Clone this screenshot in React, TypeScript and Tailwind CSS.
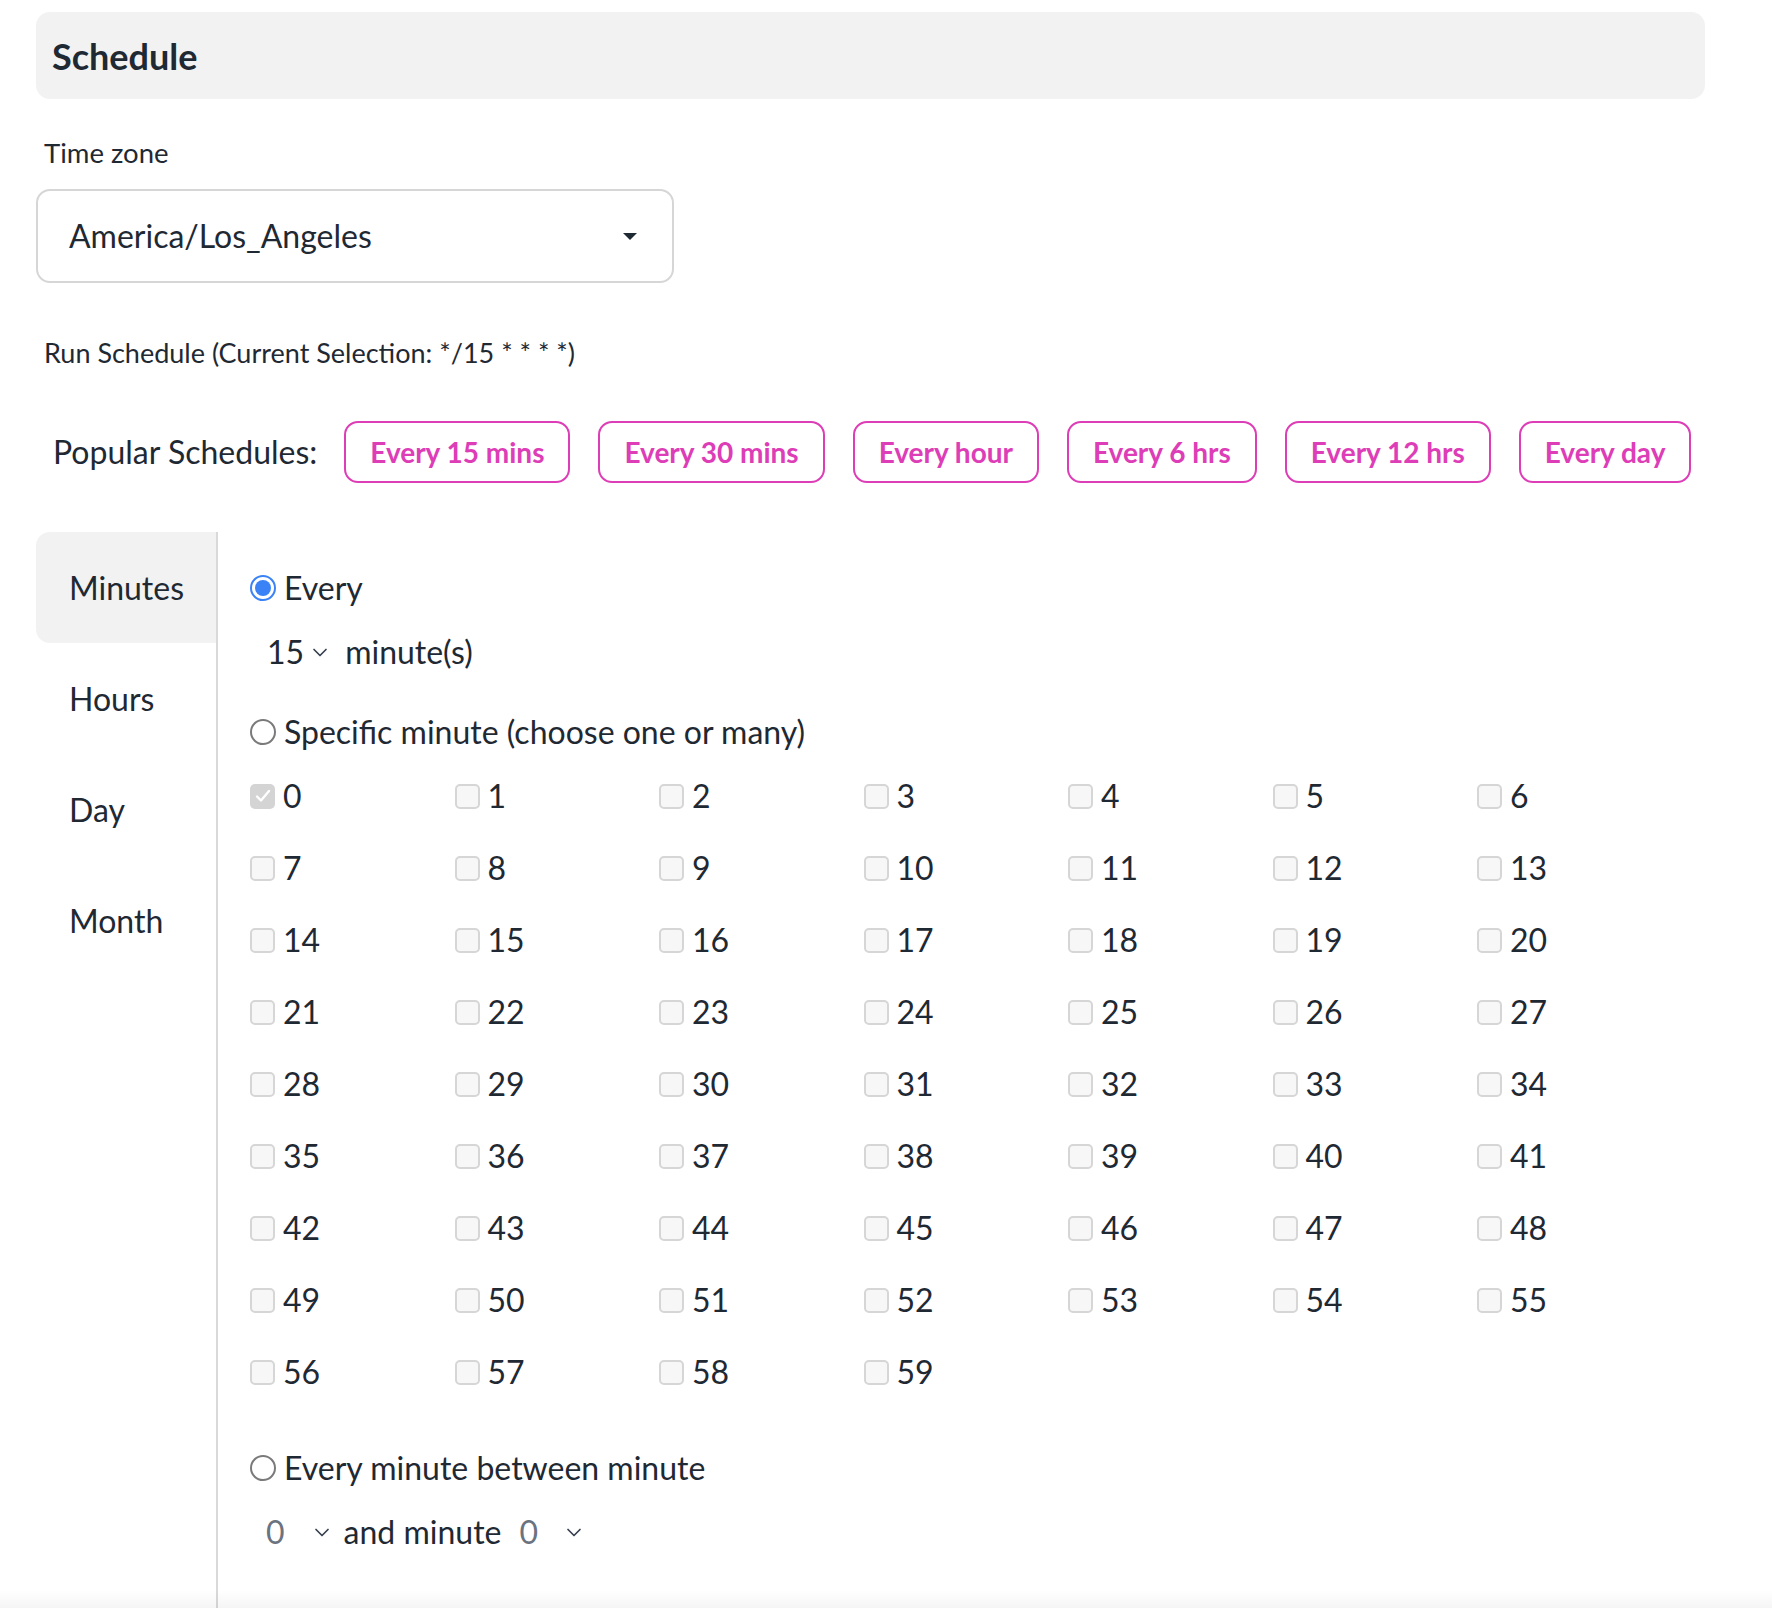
import React, { useState } from 'react';

const popularSchedules = ['Every 15 mins', 'Every 30 mins', 'Every hour', 'Every 6 hrs', 'Every 12 hrs', 'Every day'];
const tabs = ['Minutes', 'Hours', 'Day', 'Month'];
const minutes = Array.from({ length: 60 }, (_, i) => i);

const Radio: React.FC<{ checked?: boolean }> = ({ checked }) =>
  checked ? (
    <span className="w-[26px] h-[26px] rounded-full border-2 border-[#3b82f6] bg-white flex items-center justify-center shrink-0">
      <span className="w-[16px] h-[16px] rounded-full bg-[#3b82f6]" />
    </span>
  ) : (
    <span className="w-[26px] h-[26px] rounded-full border-2 border-[#7a7a7a] bg-white shrink-0" />
  );

const Chevron: React.FC = () => (
  <svg width="16" height="9" viewBox="0 0 16 9" fill="none" className="shrink-0">
    <path d="M2 1.5 L8 7.5 L14 1.5" stroke="#374151" strokeWidth="1.7" strokeLinecap="round" strokeLinejoin="round" />
  </svg>
);

const Checkbox: React.FC<{ checked?: boolean }> = ({ checked }) =>
  checked ? (
    <span className="w-[25px] h-[25px] rounded-[5px] bg-[#d4d4d4] flex items-center justify-center shrink-0">
      <svg width="16" height="14" viewBox="0 0 16 14" fill="none">
        <path d="M2 7.5 L6 11.5 L14 2" stroke="#ffffff" strokeWidth="2.4" strokeLinecap="round" strokeLinejoin="round" />
      </svg>
    </span>
  ) : (
    <span className="w-[25px] h-[25px] rounded-[5px] border-2 border-[#d6d6d6] bg-[#f7f7f7] shrink-0" />
  );

const App: React.FC = () => {
  const [activeTab, setActiveTab] = useState('Minutes');

  return (
    <div className="min-h-[1608px] bg-white text-[#1f2933] font-['Lato','Noto_Sans',sans-serif] pt-[12px] pl-[36px] relative overflow-hidden">
      <div className="w-[1669px]">
        {/* Header */}
        <div className="h-[87px] rounded-[14px] bg-[#f2f2f2] flex items-center pl-[16px]">
          <h1 className="text-[36px] font-bold leading-none">Schedule</h1>
        </div>

        {/* Time zone */}
        <div className="mt-[38px] pl-[8px] text-[27.5px] leading-[32px]">Time zone</div>
        <div className="mt-[20px] w-[638px] h-[94px] rounded-[14px] border-2 border-[#d6d6d6] flex items-center justify-between pl-[31px] pr-[34px]">
          <span className="text-[32px]">America/Los_Angeles</span>
          <svg width="16" height="9" viewBox="0 0 16 9">
            <path d="M1 1 L15 1 L8 8 Z" fill="#1f2933" />
          </svg>
        </div>

        <div className="mt-[54px] pl-[8px] text-[27px] leading-[32px]">Run Schedule (Current Selection: */15 * * * *)</div>

        {/* Popular schedules */}
        <div className="mt-[52px] flex items-center pl-[17px] whitespace-nowrap">
          <span className="text-[32px] mr-[27px] shrink-0">Popular Schedules:</span>
          <div className="flex gap-[28px] shrink-0">
            {popularSchedules.map(s => (
              <button
                key={s}
                className="h-[62px] px-[24px] shrink-0 whitespace-nowrap rounded-[14px] border-2 border-[#dd3db6] text-[#dd3db6] text-[28px] font-bold bg-white"
              >
                {s}
              </button>
            ))}
          </div>
        </div>

        {/* Tabs */}
        <div className="mt-[49px] flex">
          <div className="w-[182px] shrink-0 border-r-2 border-[#d9d9d9] min-h-[1076px]">
            {tabs.map(t => (
              <div
                key={t}
                onClick={() => setActiveTab(t)}
                className={`h-[111px] flex items-center pl-[33px] text-[32px] rounded-l-[14px] cursor-pointer ${
                  activeTab === t ? 'bg-[#f2f2f2]' : ''
                }`}
              >
                {t}
              </div>
            ))}
          </div>

          <div className="pl-[32px] pt-[38px] text-[32px]">
            <label className="flex items-center gap-[8px] h-[36px]">
              <Radio checked />
              <span>Every</span>
            </label>
            <div className="mt-[28px] h-[36px] flex items-center pl-[17px]">
              <span>15</span>
              <span className="ml-[8px] mr-[17px]"><Chevron /></span>
              <span>minute(s)</span>
            </div>

            <label className="mt-[44px] flex items-center gap-[8px] h-[36px]">
              <Radio />
              <span>Specific minute (choose one or many)</span>
            </label>

            <div className="mt-[28px] grid grid-cols-[repeat(7,204.5px)] gap-y-[36px]">
              {minutes.map(m => (
                <label key={m} className="flex items-center gap-[8px] h-[36px]">
                  <Checkbox checked={m === 0} />
                  <span>{m}</span>
                </label>
              ))}
            </div>

            <label className="mt-[60px] flex items-center gap-[8px] h-[36px]">
              <Radio />
              <span>Every minute between minute</span>
            </label>
            <div className="mt-[28px] h-[36px] flex items-center pl-[16px]">
              <span className="text-[#6b7280]">0</span>
              <span className="ml-[29px] mr-[14px]"><Chevron /></span>
              <span>and minute</span>
              <span className="ml-[18px] text-[#6b7280]">0</span>
              <span className="ml-[28px]"><Chevron /></span>
            </div>
          </div>
        </div>
      </div>

      {/* bottom fade */}
      <div className="absolute left-0 right-0 bottom-0 h-[18px] bg-gradient-to-b from-transparent to-[#0000000a] pointer-events-none" />
    </div>
  );
};

export default App;
